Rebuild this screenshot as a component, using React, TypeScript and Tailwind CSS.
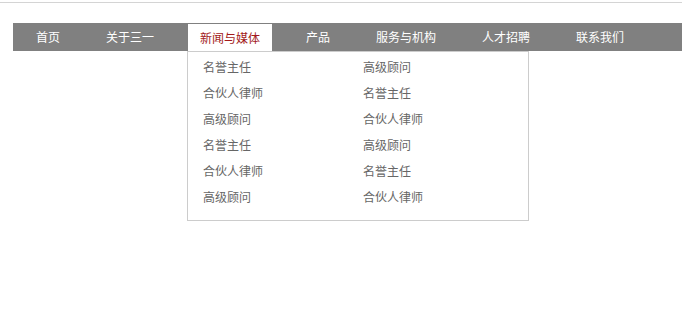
const navItems = ["首页", "关于三一", "新闻与媒体", "产品", "服务与机构", "人才招聘", "联系我们"];

const leftCol = ["名誉主任", "合伙人律师", "高级顾问", "名誉主任", "合伙人律师", "高级顾问"];
const rightCol = ["高级顾问", "名誉主任", "合伙人律师", "高级顾问", "名誉主任", "合伙人律师"];

export default function App() {
  return (
    <div className="min-h-[328px] bg-white font-['Noto_Sans_CJK_SC','Microsoft_YaHei',sans-serif]">
      <div className="h-[2px]" />
      <div className="h-px bg-[#d4d4d4]" />

      <ul className="mt-[20px] ml-[13px] flex h-[28px] bg-[#808080]">
        {navItems.map((item) =>
          item === "新闻与媒体" ? (
            <li key={item} className="relative px-[11px]">
              <span className="relative top-[1px] flex h-[28px] items-center bg-white px-[12px] text-[12px] text-[#a31a1a]">
                {item}
              </span>
              <div className="absolute left-[10px] top-[28px] z-10 w-[342px] border border-[#cccccc] bg-white pt-[2px] pb-[10px] pl-[15px]">
                <div className="grid grid-cols-[160px_160px]">
                  {leftCol.map((l, i) => (
                    <div key={i} className="contents">
                      <div className="flex h-[26px] items-center text-[12px] text-[#666]">{l}</div>
                      <div className="flex h-[26px] items-center text-[12px] text-[#666]">{rightCol[i]}</div>
                    </div>
                  ))}
                </div>
              </div>
            </li>
          ) : (
            <li key={item} className="flex items-center px-[23px] text-[12px] text-white">
              {item}
            </li>
          )
        )}
      </ul>
    </div>
  );
}
